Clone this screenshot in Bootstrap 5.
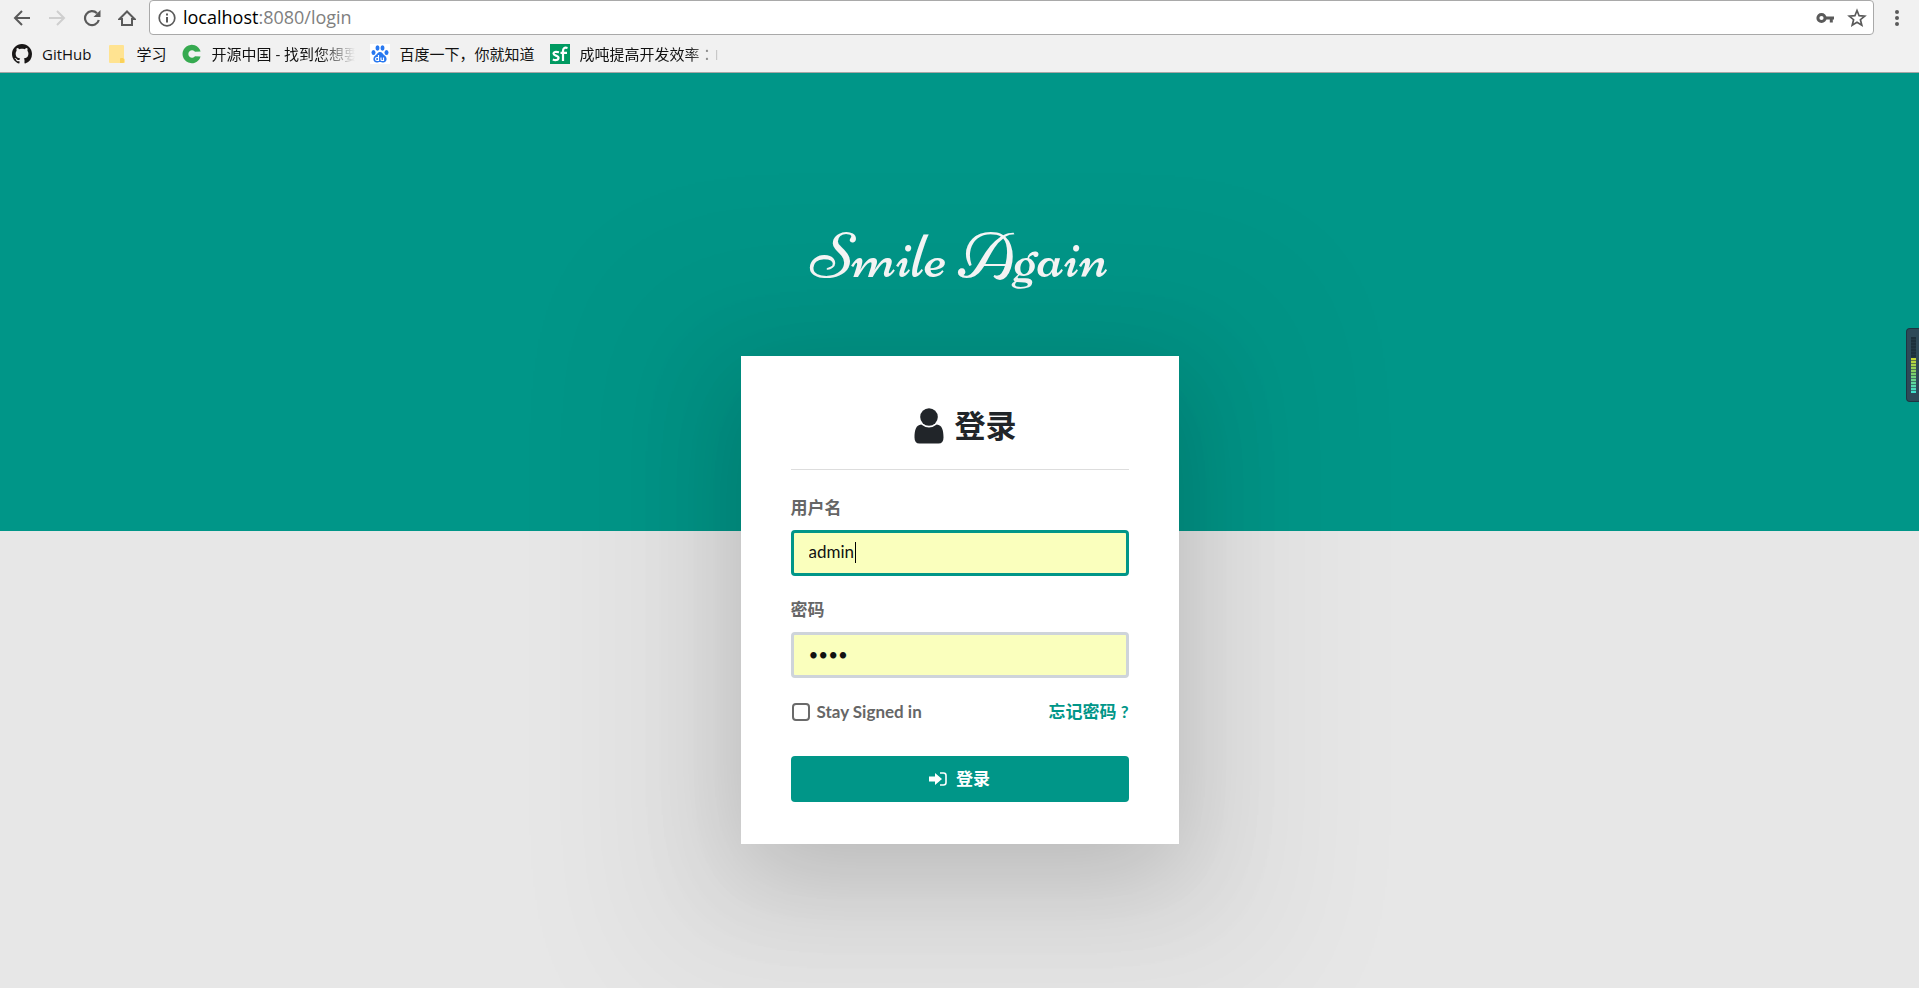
<!DOCTYPE html>
<html lang="zh-CN">
<head>
<meta charset="utf-8">
<meta name="viewport" content="width=device-width, initial-scale=1">
<title>登录 - Smile Again</title>
<link href="https://cdn.jsdelivr.net/npm/bootstrap@5.3.0/dist/css/bootstrap.min.css" rel="stylesheet">
<style>
  :root { --brand: #009688; }
  body { font-family: Lato, "Noto Sans CJK SC", sans-serif; font-size: 17px; }

  /* browser toolbar */
  .chrome-bar { background: #f1f1f1; border-bottom: 1px solid #a6a6a6; font-family: "Open Sans", "Noto Sans CJK SC", sans-serif; }
  .tool-row { padding: 0 5px 0 4px; height: 35px; }
  .tool-btn { width: 35px; height: 35px; color: #5a5a5a; }
  .tool-btn svg, .bookmark svg, .address svg { display: block; flex: none; }
  .tool-btn:disabled { color: #cfcfcf; opacity: 1; border-color: transparent; }
  .address { height: 35px; margin: 0 5px; padding: 0 6px 0 8px; gap: 12px; background: #fff; border: 1px solid #a9a9a9; border-radius: 4px; font-size: 18px; line-height: 33px; color: #808080; }
  .address b { font-weight: 400; color: #000; }
  .url { margin-left: -5px; }
  .bookmarks { height: 37px; padding: 0 12px; gap: 15px; font-size: 15px; }
  .bookmark { gap: 10px; color: #111; line-height: 20px; }
  .fading { width: 143px; overflow: hidden; -webkit-mask-image: linear-gradient(90deg, #000 75%, transparent); mask-image: linear-gradient(90deg, #000 75%, transparent); }
  .mid-colon { font-family: "Noto Sans CJK TC", sans-serif; }

  /* login page */
  .login-page { padding-bottom: 2px; background: linear-gradient(var(--brand) calc(50% + 1px), #e7e7e7 calc(50% + 1px)); overflow: hidden; }
  .logo-text { margin: 0 0 58px; font: 400 65px/82px Niconne, "Liberation Serif", cursive; color: #f8f8f8; }
  .login-box { width: 438px; max-width: 100%; padding: 41px 50px 42px; background: #fff; box-shadow: 0 29px 147px 102px rgba(0,0,0,.05), 0 29px 95px 0 rgba(0,0,0,.16); }
  .login-head { gap: 11px; height: 73px; padding: 0 0 14px 11px; margin-bottom: 24px; border-bottom: 1px solid #ddd; font-size: 31px; font-weight: 700; color: #212529; }
  .field-label { display: block; margin-bottom: 8px; line-height: 28px; font-weight: 700; color: #666; }
  .login-input, .login-input:focus { height: 46px; padding: 0 15px 2px; border: 3px solid #ced4da; border-radius: 4px; background-color: #faffbd; color: #111; font-size: 17px; box-shadow: none; }
  .login-input.is-current { border-color: var(--brand); background-image: linear-gradient(#000, #000); background-size: 1px 21px; background-position: 61px 9px; background-repeat: no-repeat; }
  .login-input[type=password] { padding-bottom: 0; }
  .field { margin-bottom: 20px; }
  .login-options { margin: 20px 0 30px; line-height: 28px; font-weight: 700; color: #666; }
  .login-options .form-check-input { width: 18px; height: 18px; margin: 0 7px 0 1px; border: 2px solid #6a6a6a; border-radius: 4px; box-shadow: none; }
  .login-options a { color: var(--brand); }
  .btn-login { height: 46px; gap: 9px; background: var(--brand); color: #fff; font-size: 17px; font-weight: 700; border: 0; border-radius: 4px; }
  .btn-login:hover { background: #00796b; color: #fff; }

  /* desktop level meter docked at the screen edge */
  .level-meter { top: 328px; right: 0; width: 13px; height: 74px; padding: 8px 3px 8px 4px; background: #2e4a58; border: 1px solid #1e3542; border-right: 0; border-radius: 4px 0 0 4px; }
  .level-meter div { height: 100%; background: repeating-linear-gradient(transparent 0 2px, rgba(38,61,73,.6) 2px 3px), linear-gradient(#1c303b 0 38%, #c8d631 38%, #7ccf6a 65%, #3fe0d0); }
</style>
</head>
<body class="d-flex flex-column min-vh-100">
<header class="chrome-bar">
  <div class="tool-row d-flex align-items-center">
    <button class="tool-btn btn p-0 d-flex align-items-center justify-content-center" aria-label="后退"><svg width="18" height="18" viewBox="0 0 18 18" fill="none" stroke="currentColor" stroke-width="2"><path d="M17 9H2M9 2L2 9l7 7"/></svg></button>
    <button class="tool-btn btn p-0 d-flex align-items-center justify-content-center" aria-label="前进" disabled><svg width="18" height="18" viewBox="0 0 18 18" fill="none" stroke="currentColor" stroke-width="2"><path d="M1 9h15M9 2l7 7-7 7"/></svg></button>
    <button class="tool-btn btn p-0 d-flex align-items-center justify-content-center" aria-label="重新加载"><svg width="18" height="18" viewBox="0 0 18 18"><path d="M14 4.200A7 7 0 1 0 15.800 11" fill="none" stroke="currentColor" stroke-width="2.200"/><path d="M17.500 1v7h-7z" fill="currentColor"/></svg></button>
    <button class="tool-btn btn p-0 d-flex align-items-center justify-content-center" aria-label="主页"><svg width="18" height="18" viewBox="0 0 18 18" fill="none" stroke="currentColor" stroke-width="2"><path d="M1.500 10L9 2.500l7.500 7.500H14v6H4v-6z"/></svg></button>
    <div class="address d-flex align-items-center flex-grow-1">
      <svg width="18" height="18" viewBox="0 0 18 18"><circle cx="9" cy="9" r="7.800" fill="none" stroke="#5a5a5a" stroke-width="1.700"/><path d="M9 4.500v2M9 8v5.500" stroke="#5a5a5a" stroke-width="2"/></svg>
      <span class="url flex-grow-1"><b>localhost</b>:8080/login</span>
      <svg width="20" height="18" viewBox="0 0 20 18"><circle cx="6.500" cy="9" r="3.600" fill="none" stroke="#5a5a5a" stroke-width="3"/><path d="M10 7.500h9v3h-1.200v3h-3v-3H10z" fill="#5a5a5a"/></svg>
      <svg width="20" height="20" viewBox="0 0 20 20" fill="none" stroke="#5a5a5a" stroke-width="1.700"><path d="M10 2.500l2.100 5.200 5.600.4-4.300 3.600 1.400 5.500L10 14.200l-4.800 3 1.400-5.500-4.300-3.600 5.600-.4z"/></svg>
    </div>
    <button class="tool-btn btn p-0 d-flex align-items-center justify-content-center" aria-label="菜单"><svg width="6" height="18" viewBox="0 0 6 18" fill="currentColor"><circle cx="3" cy="3" r="2"/><circle cx="3" cy="9" r="2"/><circle cx="3" cy="15" r="2"/></svg></button>
  </div>
  <nav class="bookmarks d-flex align-items-center text-nowrap overflow-hidden" aria-label="书签">
    <a class="bookmark d-flex align-items-center text-decoration-none" href="#"><svg width="20" height="20" viewBox="0 0 16 16" fill="#191717"><path d="M8 0C3.580 0 0 3.580 0 8c0 3.540 2.290 6.530 5.470 7.590.4.070.55-.17.55-.38 0-.19-.01-.82-.01-1.490-2.010.37-2.530-.49-2.690-.94-.09-.23-.48-.94-.82-1.130-.28-.15-.68-.52-.01-.53.63-.01 1.080.58 1.230.82.72 1.210 1.870.87 2.330.66.07-.52.28-.87.51-1.070-1.780-.2-3.640-.89-3.640-3.950 0-.87.31-1.590.82-2.150-.08-.2-.36-1.020.08-2.120 0 0 .67-.21 2.200.82.64-.18 1.320-.27 2-.27s1.360.09 2 .27c1.530-1.040 2.200-.82 2.200-.82.44 1.100.16 1.920.08 2.120.51.56.82 1.270.82 2.150 0 3.070-1.870 3.750-3.650 3.950.29.25.54.73.54 1.480 0 1.070-.01 1.930-.01 2.200 0 .21.15.46.55.38A8.010 8.010 0 0 0 16 8c0-4.420-3.580-8-8-8z"/></svg>GitHub</a>
    <a class="bookmark d-flex align-items-center text-decoration-none" href="#"><svg width="20" height="20" viewBox="0 0 20 20"><path d="M3 2q0-1 1-1h13q1 0 1 1v12.500l1 1V18q0 1-1 1H4q-1 0-1-1z" fill="#ffe391"/><path d="M14 19v-4q0-1 1-1h2l1 1v3q0 1-1 1z" fill="#fad25a"/></svg>学习</a>
    <a class="bookmark d-flex align-items-center text-decoration-none" href="#"><svg width="20" height="20" viewBox="0 0 20 20"><path d="M16.200 5.200A7.900 6.600 0 0 0 10.500 3.500M14.800 5.200A6.300 6.300 0 1 0 14.800 14.800" fill="none" stroke="#36aa50" stroke-width="0"/><path d="M18.600 7.600A9.200 9.200 0 1 0 18.600 12.400L13 12.200A3.700 3.700 0 1 1 13 7.800z" fill="#36aa50"/></svg><span class="fading">开源中国 - 找到您想要</span></a>
    <a class="bookmark d-flex align-items-center text-decoration-none" href="#"><svg width="20" height="20" viewBox="0 0 20 20"><path fill="#fff" d="M0 0h20v20H0z"/><g fill="#2878f0"><ellipse cx="3.500" cy="8.500" rx="2" ry="2.600"/><ellipse cx="7.500" cy="4" rx="2" ry="2.700"/><ellipse cx="12.500" cy="4" rx="2" ry="2.700"/><ellipse cx="16.500" cy="8.500" rx="2" ry="2.600"/><path d="M10 8c2 0 3 2.200 4.700 3.600 3.400 2.800 1.800 7-1.300 7-1.700 0-2-.5-3.400-.5s-1.700.5-3.400.5c-3.100 0-4.700-4.200-1.300-7C7 10.200 8 8 10 8z"/></g><path d="M8.500 11v5.500H7a1.500 1.500 0 0 1 0-3h1.500M11 13.500v2q0 1 1 1h1.500v-3" fill="none" stroke="#fff" stroke-width="1.200"/></svg>百度一下，你就知道</a>
    <a class="bookmark d-flex align-items-center text-decoration-none" href="#"><svg width="20" height="20" viewBox="0 0 20 20"><path fill="#009a61" d="M0 0h20v20H0z"/><path d="M9 8.200Q3.500 7 3.500 9.600c0 2.400 5 1.600 5 4.200 0 2.800-3.600 2.600-5.700 1.700M17.500 4Q13 2.600 13 7v10M10.500 8.800h6.500" fill="none" stroke="#fff" stroke-width="2.200"/></svg><span class="fading">成吨提高开发效率<span class="mid-colon" lang="zh-TW">：</span>I</span></a>
  </nav>
</header>

<main class="login-page flex-grow-1 d-flex flex-column align-items-center justify-content-center">
  <h1 class="logo-text">Smile Again</h1>
  <form class="login-box">
    <h2 class="login-head d-flex align-items-center justify-content-center"><svg width="30" height="36" viewBox="0 0 30 36" fill="currentColor" aria-hidden="true"><circle cx="15" cy="9" r="8.800"/><path d="M7.200 16.500Q15 22.500 22.800 16.500C28 17 29.500 22 29.500 29.500Q29.500 35.500 24.500 35.500H5.500Q.5 35.500.5 29.500C.5 22 2 17 7.200 16.500z"/></svg>登录</h2>
    <div class="field">
      <label class="field-label" for="username">用户名</label>
      <input class="form-control login-input is-current" id="username" type="text" value="admin">
    </div>
    <div class="field">
      <label class="field-label" for="password">密码</label>
      <input class="form-control login-input" id="password" type="password" value="1234">
    </div>
    <div class="login-options d-flex align-items-center justify-content-between">
      <div class="d-flex align-items-center">
        <input class="form-check-input" id="stay" type="checkbox"><label for="stay">Stay Signed in</label>
      </div>
      <a class="text-decoration-none" href="#">忘记密码 ?</a>
    </div>
    <button class="btn btn-login w-100 d-flex align-items-center justify-content-center" type="submit"><svg width="18" height="14" viewBox="0 0 18 14" aria-hidden="true"><path d="M0 4.500h6V1l7 6-7 6V9.500H0z" fill="#fff"/><path d="M11 1h3.500Q17 1 17 3.500v7q0 2.500-2.500 2.500H11" fill="none" stroke="#fff" stroke-width="1.600"/></svg>登录</button>
  </form>
</main>
<div class="level-meter position-absolute" aria-hidden="true"><div></div></div>
<script src="https://cdn.jsdelivr.net/npm/bootstrap@5.3.0/dist/js/bootstrap.bundle.min.js"></script>
</body>
</html>
